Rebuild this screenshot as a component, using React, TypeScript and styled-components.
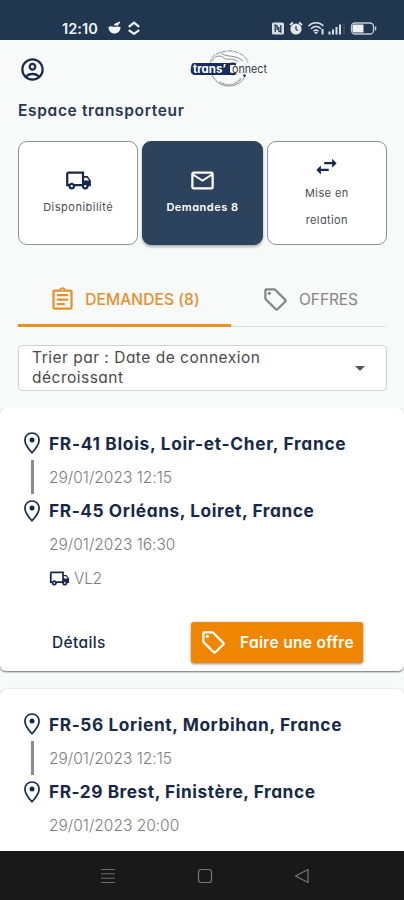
import React from "react";
import styled, { createGlobalStyle, css } from "styled-components";
import {
  MdArrowDropDown,
  MdMailOutline,
  MdOutlineAccountCircle,
  MdOutlineAssignment,
  MdOutlineLocalShipping,
  MdSwapHoriz,
} from "react-icons/md";

const navy = "#17294b";
const orange = "#f08500";

const GlobalStyle = createGlobalStyle`
  *, *::before, *::after { box-sizing: border-box; }
  body { margin: 0; background: #f8f9f9; }
  button { font: inherit; border: 0; background: none; padding: 0; margin: 0; letter-spacing: inherit; }
  svg { display: block; flex: none; }
`;

const Screen = styled.div`
  display: flex;
  flex-direction: column;
  width: 404px;
  height: 900px;
  overflow: hidden;
  background: #f8f9f9;
  color: ${navy};
  font-family: Inter, "Open Sans", sans-serif;
  font-feature-settings: "cv11" 1, "calt" 0;
`;

const StatusBar = styled.div`
  flex: none;
  display: flex;
  justify-content: space-between;
  height: 40px;
  padding: 19px 27px 0 62px;
  background: #21374f;
  color: #f2f5f7;
`;

const StatusGroup = styled.div<{ $gap: number }>`
  display: flex;
  align-items: center;
  gap: ${(p) => p.$gap}px;
  height: 18px;
`;

const Clock = styled.span`
  width: 40px;
  font-size: 14.5px;
  font-weight: 600;
  letter-spacing: 0.1px;
  white-space: nowrap;
`;

const Header = styled.header`
  flex: none;
  display: flex;
  align-items: center;
  gap: 144px;
  height: 58px;
  padding-left: 19px;
`;

const Title = styled.h1`
  flex: none;
  margin: 0;
  padding-left: 18px;
  height: 43px;
  line-height: 25px;
  font-size: 15.5px;
  font-weight: 600;
  letter-spacing: 0.66px;
  color: #263853;
`;

const Tiles = styled.div`
  flex: none;
  display: grid;
  grid-template-columns: repeat(3, 1fr);
  gap: 4px;
  height: 104px;
  padding: 0 17px 0 18px;
`;

const Tile = styled.button<{ $active?: boolean }>`
  display: flex;
  flex-direction: column;
  align-items: center;
  justify-content: center;
  border: 1px solid #8f9296;
  border-radius: 9px;
  padding-top: 1px;
  background: #fff;
  color: ${navy};
  ${(p) =>
    p.$active &&
    css`
      border-color: #2d435d;
      background: #2d435d;
      color: #fff;
      box-shadow: 0 2px 3px rgba(0, 0, 0, 0.3);
    `}
`;

const TileLabel = styled.span<{ $active?: boolean; $spacing: number }>`
  font-size: 11px;
  line-height: 27px;
  white-space: nowrap;
  font-weight: ${(p) => (p.$active ? 600 : 400)};
  letter-spacing: ${(p) => p.$spacing}px;
  color: ${(p) => (p.$active ? "#fff" : "#4b4d52")};
`;

const Tabs = styled.div`
  flex: none;
  display: flex;
  height: 54px;
  margin: 28px 17px 0 18px;
`;

const Tab = styled.button<{ $active?: boolean }>`
  display: flex;
  align-items: center;
  justify-content: center;
  gap: ${(p) => (p.$active ? 9 : 10)}px;
  width: ${(p) => (p.$active ? 213 : 156)}px;
  border-bottom: ${(p) => (p.$active ? "3px solid #e78f22" : "1px solid #dfe0e0")};
  padding: ${(p) => (p.$active ? "1px 0 0" : "0 0 0 2px")};
  font-size: 15.5px;
  font-weight: ${(p) => (p.$active ? 500 : 400)};
  letter-spacing: ${(p) => (p.$active ? 0.1 : -0.1)}px;
  white-space: nowrap;
  color: ${(p) => (p.$active ? "#e5902d" : "#858585")};
`;

const SortSelect = styled.div`
  flex: none;
  display: flex;
  align-items: center;
  justify-content: space-between;
  height: 46px;
  margin: 18px 17px 0 18px;
  padding: 0 14px 0 13px;
  border: 1px solid #cfcfcf;
  border-radius: 4px;
  background: #fff;
  font-size: 15.5px;
  line-height: 20px;
  letter-spacing: 0.5px;
  color: #4a4a4a;
`;

const SortText = styled.span`
  width: 250px;
`;

const Cards = styled.main`
  flex: 1;
  min-height: 0;
  display: flex;
  flex-direction: column;
  gap: 18px;
  margin-top: 17px;
  overflow: hidden;
`;

const Card = styled.article`
  flex: none;
  height: 263px;
  padding: 18.500px 20px 0;
  border-radius: 6px;
  background: #fff;
  box-shadow: 0 1px 2px rgba(0, 0, 0, 0.55), 0 0 3px rgba(0, 0, 0, 0.06);
`;

const Route = styled.div`
  display: grid;
  grid-template-columns: 24px 1fr;
  grid-auto-rows: 33.8px;
  column-gap: 5px;
  align-items: center;
  justify-items: start;
  white-space: nowrap;
`;

const Place = styled.strong<{ $spacing: number }>`
  font-size: 17.3px;
  font-weight: 700;
  letter-spacing: ${(p) => p.$spacing}px;
`;

const DateText = styled.time`
  grid-column: 2;
  font-size: 15.5px;
  font-weight: 300;
  letter-spacing: 0;
  color: #7c7c7c;
`;

const Connector = styled.i`
  justify-self: center;
  width: 3px;
  height: 34px;
  background: #8b8b8b;
`;

const Vehicle = styled.span`
  grid-column: 2;
  display: flex;
  align-items: center;
  gap: 4px;
  font-size: 15.5px;
  font-weight: 300;
  letter-spacing: -0.3px;
  color: #7c7c7c;
`;

const Actions = styled.div`
  display: flex;
  align-items: center;
  justify-content: space-between;
  height: 41px;
  margin-top: 26.500px;
  padding: 0 21px 0 32px;
  font-size: 15.5px;
  font-weight: 500;
`;

const DetailsButton = styled.button`
  color: ${navy};
  letter-spacing: 0.35px;
`;

const OfferButton = styled.button`
  display: flex;
  align-items: center;
  gap: 13px;
  width: 172px;
  height: 41px;
  padding-left: 9px;
  border-radius: 3px;
  background: ${orange};
  color: #fff;
  font-weight: 600;
  letter-spacing: 0.32px;
  white-space: nowrap;
  box-shadow: 0 1px 3px rgba(0, 0, 0, 0.45);
`;

const NavBar = styled.nav`
  flex: none;
  display: grid;
  grid-template-columns: repeat(3, 97px);
  justify-content: center;
  justify-items: center;
  align-items: center;
  height: 49px;
  padding-left: 5px;
  background: #191919;
`;

const TagIcon = ({ size = 27 }: { size?: number }) => (
  <svg width={size} height={size} viewBox="0 0 24 24" fill="currentColor">
    <path d="M21.41 11.58l-9-9A2 2 0 0 0 11 2H4a2 2 0 0 0-2 2v7c0 .53.21 1.04.59 1.41l9 9A2 2 0 0 0 13 22a2 2 0 0 0 1.41-.59l7-7A2 2 0 0 0 22 13c0-.53-.21-1.04-.59-1.42M13 20l-9-9V4h7l9 9M6.5 5A1.5 1.5 0 1 1 5 6.5 1.5 1.5 0 0 1 6.5 5z" />
  </svg>
);

const PinIcon = () => (
  <svg width="24" height="26" viewBox="0 0 24 26">
    <path
      d="M12 3c-4 0-7.100 3-7.100 7 0 5 7.100 12.800 7.100 12.800S19.100 15 19.100 10c0-4-3.100-7-7.100-7z"
      fill="none"
      stroke={navy}
      strokeWidth="1.700"
    />
    <circle cx="12" cy="10" r="2.500" fill={navy} />
  </svg>
);

const Logo = () => (
  <svg width="78" height="40" viewBox="0 0 78 40">
    <g fill="none" stroke="#8a8f96" strokeWidth="1">
      <path d="M21 15C19 8 27 3 37 2s20 5 21 12" strokeDasharray="5 1" />
      <path d="M22 12c3-6 9-6 12-3s10-1 14 4M31 4c6 5 14 1 22 8" />
      <path d="M22 25c2 7 9 12 17 12s14-5 16-10" />
      <path d="M30 33c6 4 16 4 21-4" strokeWidth="1.6" strokeDasharray="1 .7" />
    </g>
    <path d="M4 14h36v12H5c-4 0-5-4-4-7 0-3 1-5 3-5z" fill="#182b60" />
    <path d="M46 15.500c-5-2-9 0-9 4.500s4 6 9 4.500" fill="none" stroke="#182b60" strokeWidth="2.200" />
    <circle cx="54.5" cy="26.500" r="1.300" fill="#182b60" />
    <text x="3" y="23.500" fontSize="11.500" fontWeight="700" fill="#fff" textLength="33" lengthAdjust="spacingAndGlyphs">trans’</text>
    <text x="42" y="23.500" fontSize="11" fill="#343b45" textLength="35" lengthAdjust="spacingAndGlyphs">onnect</text>
  </svg>
);

const AppIcons = () => (
  <svg width="34" height="16" viewBox="0 0 34 16" fill="#f2f5f7">
    <path d="M.5 7c2-1.500 4-.5 5.500 0 2-.8 4-.8 6.500 0 0 4-2.500 6.500-6 6.500S.5 11 .5 7zM6 5.500a2.500 2.500 0 0 1 2.500-2.500l3-1.500.8.8-2.300 3.200z" />
    <g fill="none" stroke="#f2f5f7" strokeWidth="2.200" strokeLinejoin="round">
      <path d="M20.800 6.800L26 2.600l5.200 4.200M20.800 10.200L26 13.800l5.200-3.600" />
    </g>
  </svg>
);

const SystemIcons = () => (
  <svg width="106" height="16" viewBox="0 0 106 16">
    <rect x="1" y="2.500" width="12" height="12" rx="1.500" fill="#d9dee3" />
    <path d="M4.200 12V5l2 1v4M9.800 5v7l-2-1V7" fill="none" stroke="#21374f" strokeWidth="1.300" />
    <circle cx="25" cy="9" r="5.600" fill="#e3e7ea" />
    <path d="M19 5l3-2.500M31 5l-3-2.500" stroke="#e3e7ea" strokeWidth="1.800" />
    <path d="M25 6v3.500l2 1" fill="none" stroke="#21374f" strokeWidth="1.200" />
    <g fill="none" stroke="#d9dee3" strokeWidth="1.500">
      <path d="M37.500 6c4.500-4.300 10.500-4.300 15 0M40 8.700c3-2.800 7-2.800 10 0M42.500 11.200c1.500-1.300 3.500-1.300 5 0" />
    </g>
    <path d="M43 12h4l-2 2.500zM50.500 9h2v5.500h-2zM57.500 11.500h2v3h-2zM61 9.500h2v5h-2zM64.500 7h2v7.500h-2zM68 4.500h2v10h-2z" fill="#d9dee3" />
    <path d="M73 3v11.500" stroke="#4b5d70" />
    <rect x="80.500" y="3" width="22" height="11" rx="3.500" fill="none" stroke="#c3cad0" strokeWidth="1.300" />
    <path d="M83 4.500h9.500v8H83a1.500 1.500 0 0 1-1.500-1.500V6A1.500 1.500 0 0 1 83 4.500z" fill="#eef1f3" />
    <path d="M104.500 6.500v4" stroke="#c3cad0" strokeWidth="1.500" />
  </svg>
);

type Stop = { place: string; date: string; spacing: number };

const RouteStops = ({ from, to, vehicle }: { from: Stop; to: Stop; vehicle?: string }) => (
  <Route>
    <PinIcon />
    <Place $spacing={from.spacing}>{from.place}</Place>
    <Connector />
    <DateText>{from.date}</DateText>
    <PinIcon />
    <Place $spacing={to.spacing}>{to.place}</Place>
    <DateText>{to.date}</DateText>
    {vehicle && (
      <Vehicle>
        <MdOutlineLocalShipping size={21} color={navy} />
        {vehicle}
      </Vehicle>
    )}
  </Route>
);

export default function App() {
  return (
    <>
      <GlobalStyle />
      <Screen>
        <StatusBar>
          <StatusGroup $gap={6}>
            <Clock>12:10</Clock>
            <AppIcons />
          </StatusGroup>
          <StatusGroup $gap={0}>
            <SystemIcons />
          </StatusGroup>
        </StatusBar>
        <Header>
          <MdOutlineAccountCircle size={27} />
          <Logo />
        </Header>
        <Title>Espace transporteur</Title>
        <Tiles>
          <Tile>
            <MdOutlineLocalShipping size={27} />
            <TileLabel $spacing={0.5}>Disponibilité</TileLabel>
          </Tile>
          <Tile $active>
            <MdMailOutline size={27} />
            <TileLabel $active $spacing={0.5}>Demandes 8</TileLabel>
          </Tile>
          <Tile>
            <MdSwapHoriz size={27} />
            <TileLabel $spacing={0.4}>
              Mise en
              <br />
              relation
            </TileLabel>
          </Tile>
        </Tiles>
        <Tabs>
          <Tab $active>
            <MdOutlineAssignment size={27} />
            DEMANDES (8)
          </Tab>
          <Tab>
            <TagIcon />
            OFFRES
          </Tab>
        </Tabs>
        <SortSelect>
          <SortText>Trier par : Date de connexion décroissant</SortText>
          <MdArrowDropDown size={24} color="#555" />
        </SortSelect>
        <Cards>
          <Card>
            <RouteStops
              from={{ place: "FR-41 Blois, Loir-et-Cher, France", date: "29/01/2023 12:15", spacing: 0.7 }}
              to={{ place: "FR-45 Orléans, Loiret, France", date: "29/01/2023 16:30", spacing: 0.57 }}
              vehicle="VL2"
            />
            <Actions>
              <DetailsButton>Détails</DetailsButton>
              <OfferButton>
                <TagIcon />
                Faire une offre
              </OfferButton>
            </Actions>
          </Card>
          <Card>
            <RouteStops
              from={{ place: "FR-56 Lorient, Morbihan, France", date: "29/01/2023 12:15", spacing: 0.59 }}
              to={{ place: "FR-29 Brest, Finistère, France", date: "29/01/2023 20:00", spacing: 0.54 }}
            />
          </Card>
        </Cards>
        <NavBar>
          <svg width="16" height="16" viewBox="0 0 16 16" stroke="#6d6d6d">
            <path d="M1 1.500h14M1 5.800h14M1 10.200h14M1 14.500h14" />
          </svg>
          <svg width="16" height="16" viewBox="0 0 16 16" fill="none" stroke="#777" strokeWidth="1.200">
            <rect x="1.500" y="1.500" width="13" height="13" rx="2.500" />
          </svg>
          <svg width="16" height="16" viewBox="0 0 16 16" fill="none" stroke="#777" strokeWidth="1.200" strokeLinejoin="round">
            <path d="M1.500 8L14 1.500v13z" />
          </svg>
        </NavBar>
      </Screen>
    </>
  );
}
